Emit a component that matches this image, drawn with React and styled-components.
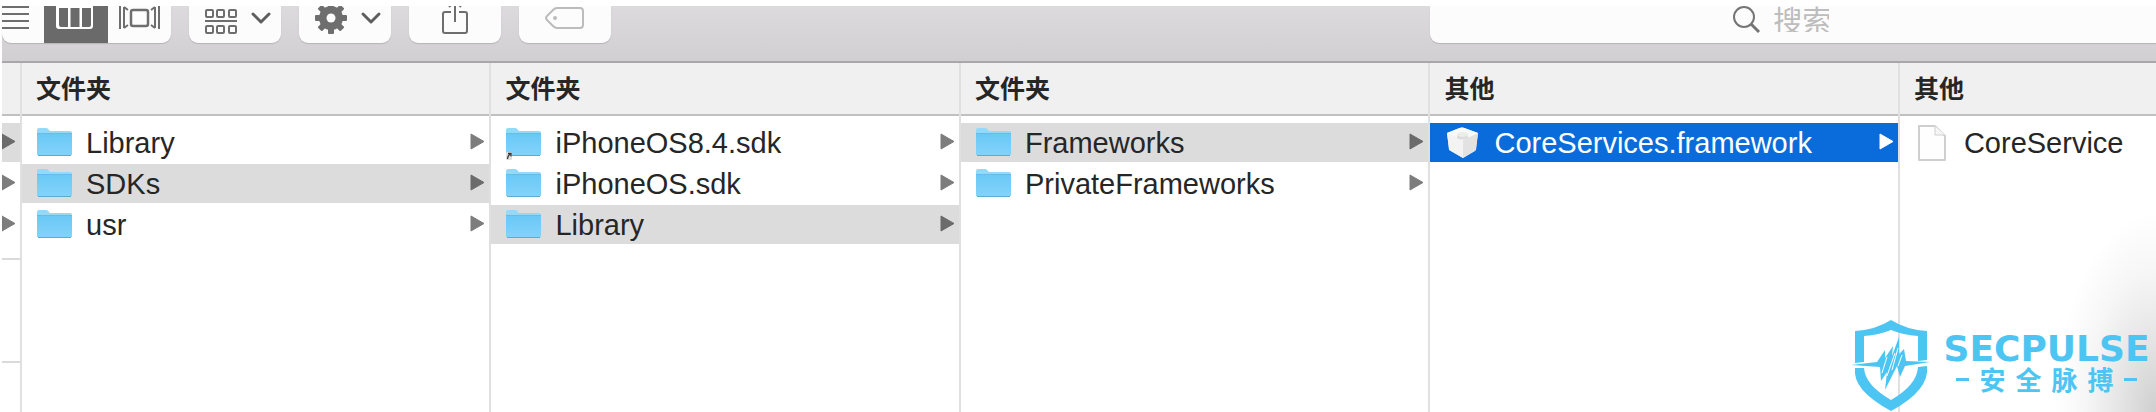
import React from 'react';
import styled, { createGlobalStyle } from 'styled-components';

const GlobalStyle = createGlobalStyle`
  * { box-sizing: border-box; }
  html, body, #root { height: 100%; }
  body {
    margin: 0;
    background: #fff;
    color: #262626;
    font-family: "Liberation Sans", "Noto Sans CJK SC", sans-serif;
    overflow: hidden;
  }
  svg { flex-shrink: 0; }
`;

const Window = styled.main`
  position: relative;
  display: flex;
  flex-direction: column;
  min-height: 100%;
  padding: 6px 0 0 2px;
  overflow: hidden;
`;

const Toolbar = styled.header`
  display: grid;
  grid-template-columns: 20px minmax(0, 33fr) minmax(0, 17fr);
  align-items: start;
  height: 57px;
  background: linear-gradient(#dcdadc, #d1cfd2);
  border-bottom: 2px solid #a9a7aa;
`;

const Tools = styled.div`
  grid-column: span 2;
  display: flex;
  gap: 18px;
`;

const Group = styled.div`
  display: flex;
  overflow: hidden;
  background: #fcfcfc;
  border-radius: 0 0 9px 9px;
  box-shadow: 0 1px 1px #b5b3b6;
`;

const Tool = styled.button`
  display: flex;
  width: ${(p) => p.$width || 92}px;
  height: 37px;
  padding: 0;
  border: 0;
  background: ${(p) => (p.$active ? '#6b6a6b' : 'transparent')};
`;

const Search = styled.label`
  display: flex;
  justify-content: center;
  align-items: flex-start;
  gap: 12px;
  height: 37px;
  background: #fcfcfc;
  border-radius: 0 0 0 9px;
  box-shadow: 0 1px 1px #b5b3b6;
  overflow: hidden;
`;

const SearchInput = styled.input`
  width: 80px;
  height: 26px;
  padding: 0;
  border: 0;
  outline: 0;
  background: transparent;
  font: 29px/26px "Noto Sans CJK SC", sans-serif;
  &::placeholder { color: #bdbdbd; opacity: 1; }
`;

const Browser = styled.div`
  flex: 1;
  display: grid;
  grid-template-columns: 20px repeat(4, minmax(0, 11fr)) minmax(0, 6fr);
`;

const Column = styled.section`
  display: flex;
  flex-direction: column;
  min-width: 0;
  overflow: hidden;
  border-right: ${(p) => (p.$last ? 0 : 2)}px solid #e0e0e0;
`;

const Heading = styled.h2`
  height: 53px;
  margin: 0;
  padding-left: 14px;
  background: #f0f0f0;
  border-bottom: 2px solid #c0c0c0;
  font: bold 25px/49px "Noto Sans CJK SC", sans-serif;
`;

const List = styled.ul`
  display: flex;
  flex-direction: column;
  gap: 2px;
  margin: 0;
  padding: 7px 0 0;
  list-style: none;
`;

const rowColors = { none: 'transparent', path: '#dcdcdc', active: '#0a6cda' };
const arrowColors = { none: '#7d7d7d', path: '#6b6b6b', active: '#fff' };

const Row = styled.li`
  display: flex;
  align-items: center;
  justify-content: flex-end;
  gap: 13px;
  height: 39px;
  padding: 0 4px 0 ${(p) => (p.$clipped ? 0 : 15)}px;
  background: ${(p) => rowColors[p.$state]};
  color: ${(p) => (p.$state === 'active' ? '#fff' : 'inherit')};
`;

const Name = styled.span`
  flex: 1;
  padding-top: 2px;
  font-size: 29px;
  line-height: 37px;
  white-space: nowrap;
`;

const Divider = styled.hr`
  width: 100%;
  height: 2px;
  margin: ${(p) => p.$top}px 0 0;
  border: 0;
  background: #dadada;
`;

const Shade = styled.div`
  position: absolute;
  right: 0;
  bottom: 0;
  width: 100px;
  height: 200px;
  background: radial-gradient(farthest-side at 100% 100%, #cfcfcf, #e4e4e4 35%, #f6f6f6 70%, rgba(255, 255, 255, 0));
`;

const Watermark = styled.div`
  position: absolute;
  right: 4px;
  bottom: 0;
  display: flex;
  gap: 10px;
  color: #4cc5f2;
`;

const Brand = styled.div`
  display: flex;
  flex-direction: column;
  align-items: center;
  min-width: 211px;
  padding-top: 14px;
`;

const BrandName = styled.strong`
  font: bold 36px/30px "DejaVu Sans", sans-serif;
`;

const BrandSub = styled.span`
  display: flex;
  align-items: center;
  gap: 10px;
  font: bold 26px/30px "Noto Sans CJK SC", sans-serif;
`;

const Dash = styled.i`
  width: 13px;
  height: 3px;
  background: currentColor;
`;

const ListIcon = () => (
  <svg width="42" height="37" stroke="#6e6e6e" strokeWidth="2">
    <path d="M0 1H27M0 8H27M0 15H27M0 22H27" />
  </svg>
);

const ColumnsIcon = () => (
  <svg width="64" height="37">
    <rect x="12" y="-2" width="37" height="25" rx="3" fill="#fff" />
    <path d="M15 2h9v19h-7q-2 0-2-2zM26.500 2h9v19h-9zM38 2h9v17q0 2-2 2h-7z" fill="#6b6a6b" />
  </svg>
);

const CoverFlowIcon = () => (
  <svg width="63" height="37" fill="none" stroke="#6e6e6e" strokeWidth="2">
    <rect x="23" y="4" width="17" height="16" rx="2" strokeWidth="2.500" />
    <path d="M12 0V23M51 0V23M16 1V22M47 1V22" />
    <path d="M16 1l4 3M16 22l4-3M47 1l-4 3M47 22l-4-3" />
  </svg>
);

const Chevron = () => <path d="M64 8l8 8 8-8" fill="none" stroke="#5e5e5e" strokeWidth="3" strokeLinecap="round" strokeLinejoin="round" />;

const ArrangeIcon = () => (
  <svg width="92" height="37" fill="none" stroke="#6e6e6e" strokeWidth="2">
    {[17, 28, 40].map((x) => (
      <React.Fragment key={x}>
        <rect x={x} y="4" width="7" height="7" rx="1" />
        <rect x={x} y="20" width="7" height="7" rx="1" />
      </React.Fragment>
    ))}
    <path d="M16 15H48" />
    <Chevron />
  </svg>
);

const GearIcon = () => (
  <svg width="92" height="37">
    <g transform="translate(32 12)" fill="#6e6e6e">
      {[0, 45, 90, 135].map((a) => (
        <rect key={a} x="-3" y="-16" width="6" height="32" rx="1" transform={`rotate(${a})`} />
      ))}
      <circle r="12" />
      <circle r="4.500" fill="#fcfcfc" />
    </g>
    <Chevron />
  </svg>
);

const ShareIcon = () => (
  <svg width="92" height="37" fill="none" stroke="#6e6e6e" strokeWidth="2">
    <path d="M42 6h-6q-2 0-2 2V25q0 2 2 2H56q2 0 2-2V8q0-2-2-2H50M46 0V16M40 1l2-2M52 1l-2-2" />
  </svg>
);

const TagIcon = () => (
  <svg width="92" height="37" fill="none" stroke="#bcbcbc" strokeWidth="2">
    <path d="M38 2H61q3 0 3 3V19q0 3-3 3H38q-2 0-4-2l-6-6q-2-2 0-4l6-6q2-2 4-2z" />
    <circle cx="36" cy="12" r="2" fill="#bcbcbc" stroke="none" />
  </svg>
);

const SearchIcon = () => (
  <svg width="28" height="30" fill="none" stroke="#757575" strokeWidth="2">
    <circle cx="11" cy="11" r="10" />
    <path d="M18 18l8 8" strokeWidth="3" />
  </svg>
);

const FolderIcon = ({ alias }) => (
  <svg width="36" height="34">
    <defs>
      <linearGradient id="folder" x2="0" y2="1">
        <stop offset="0" stopColor="#69c8f5" />
        <stop offset="1" stopColor="#82d3fa" />
      </linearGradient>
    </defs>
    <path d="M0 29V4q0-2 2-2H9q2 0 3 2l1 1H33q2 0 2 2V29z" fill="#93d9fa" />
    <path d="M0 7H35V28q0 1-1 1H1q-1 0-1-1z" fill="url(#folder)" />
    <path d="M0 7.500H35" stroke="#63bde8" />
    <path d="M1 29.500H34" stroke="#5cabd0" />
    {alias && (
      <g>
        <rect x="0" y="26" width="6" height="8" rx="1" fill="#e0e0e0" />
        <path d="M1.500 33q0-3 2.500-5M2 27.500h3v3" fill="none" stroke="#333" strokeWidth="1.300" />
      </g>
    )}
  </svg>
);

const FrameworkIcon = () => (
  <svg width="36" height="34">
    <path d="M2 7L12 3q5-3 10 0L33 7 31 24 18 32 4 24z" fill="#ededed" />
    <path d="M2 7L18 14V32L6 25Q4 24 4 22z" fill="#f3f3f3" />
    <path d="M33 7L18 14V32L30 25Q31 24 31 22z" fill="#e2e2e2" />
    <path d="M2 7L12 3q5-3 10 0L33 7 18 14z" fill="#f9f9f9" />
    <path d="M12 9v3q5 3 11 0V9z" fill="#dcdcdc" />
    <ellipse cx="17.500" cy="8.500" rx="5.500" ry="2.500" fill="#ececec" />
  </svg>
);

const FileIcon = () => (
  <svg width="36" height="38" stroke="#cfcfcf" strokeWidth="2" strokeLinejoin="round">
    <path d="M4 2H20L30 12V36H4z" fill="#fefefe" />
    <path d="M20 2V11H30" fill="#f5f5f5" strokeWidth="1" />
  </svg>
);

const Arrow = ({ state }) => (
  <svg width="15" height="19">
    <path
      d="M1 1L14 8.500 1 16z"
      fill={arrowColors[state]}
      stroke={arrowColors[state]}
      strokeLinejoin="round"
    />
  </svg>
);

const ShieldLogo = () => (
  <svg width="80" height="92" fill="currentColor">
    <path d="M40 0Q56 10 76 11V40L67 41V16Q52 15 40 10Q28 15 13 16V42L4 43V11Q24 10 40 0z" />
    <path d="M4 48H13Q14 65 40 80Q66 65 67 47L76 46Q79 70 40 91Q1 70 4 48z" />
    <path d="M0 45L26 42 34 30 34 38 42 26 41 36 48 17 48 34 53 29 55 41 79 42 54 46 49 57 46 46 34 70 36 52 30 61 29 47z" />
    <path d="M31 53L36 37M36 56L44 33M41 50L47 28M47 46L51 35" stroke="#fff" strokeWidth="1" />
  </svg>
);

const icons = { folder: FolderIcon, framework: FrameworkIcon, file: FileIcon };

const columns = [
  {
    title: '文件夹',
    items: [
      { name: 'Library' },
      { name: 'SDKs', state: 'path' },
      { name: 'usr' },
    ],
  },
  {
    title: '文件夹',
    items: [
      { name: 'iPhoneOS8.4.sdk', alias: true },
      { name: 'iPhoneOS.sdk' },
      { name: 'Library', state: 'path' },
    ],
  },
  {
    title: '文件夹',
    items: [{ name: 'Frameworks', state: 'path' }, { name: 'PrivateFrameworks' }],
  },
  {
    title: '其他',
    items: [{ name: 'CoreServices.framework', icon: 'framework', state: 'active' }],
  },
  { title: '其他', items: [{ name: 'CoreService', icon: 'file' }] },
];

function Item({ name, icon = 'folder', state = 'none', alias }) {
  const Icon = icons[icon];
  return (
    <Row $state={state}>
      <Icon alias={alias} />
      <Name>{name}</Name>
      {icon !== 'file' && <Arrow state={state} />}
    </Row>
  );
}

export default function App() {
  return (
    <>
      <GlobalStyle />
      <Window>
        <Toolbar>
          <Tools>
            <Group>
              <Tool $width={42} aria-label="列表"><ListIcon /></Tool>
              <Tool $width={64} $active aria-label="分栏"><ColumnsIcon /></Tool>
              <Tool $width={63} aria-label="封面"><CoverFlowIcon /></Tool>
            </Group>
            <Group><Tool aria-label="排列"><ArrangeIcon /></Tool></Group>
            <Group><Tool aria-label="操作"><GearIcon /></Tool></Group>
            <Group><Tool aria-label="共享"><ShareIcon /></Tool></Group>
            <Group><Tool aria-label="标记"><TagIcon /></Tool></Group>
          </Tools>
          <Search>
            <SearchIcon />
            <SearchInput type="search" placeholder="搜索" aria-label="搜索" />
          </Search>
        </Toolbar>
        <Browser>
          <Column>
            <Heading as="div" />
            <List>
              <Row $clipped $state="path"><Arrow state="path" /></Row>
              <Row $clipped $state="none"><Arrow state="none" /></Row>
              <Row $clipped $state="none"><Arrow state="none" /></Row>
            </List>
            <Divider $top={14} />
            <Divider $top={101} />
          </Column>
          {columns.map((column, i) => (
            <Column key={i} $last={i === columns.length - 1}>
              <Heading>{column.title}</Heading>
              <List>
                {column.items.map((item) => <Item key={item.name} {...item} />)}
              </List>
            </Column>
          ))}
        </Browser>
        <Shade />
        <Watermark>
          <ShieldLogo />
          <Brand>
            <BrandName>SECPULSE</BrandName>
            <BrandSub>
              <Dash />
              {[...'安全脉搏'].map((c) => <span key={c}>{c}</span>)}
              <Dash />
            </BrandSub>
          </Brand>
        </Watermark>
      </Window>
    </>
  );
}
